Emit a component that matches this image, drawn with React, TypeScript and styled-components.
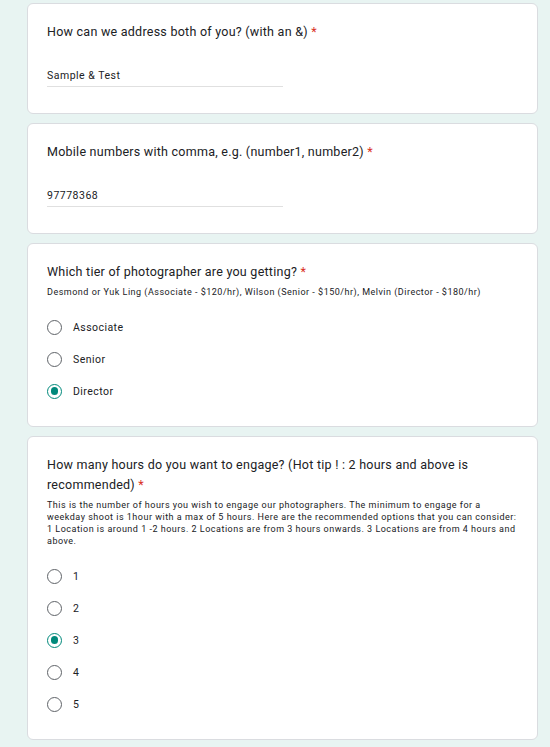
import React from "react";
import styled, { createGlobalStyle } from "styled-components";

const Global = createGlobalStyle`
  html, body { margin: 0; padding: 0; background: #e8f4f2; }
  body { font-family: Roboto, "Liberation Sans", Arial, sans-serif; color: #202124; }
`;

const Page = styled.div`
  display: flex;
  flex-direction: column;
  gap: 9px;
  padding: 3px 12px 12px 27px;
  min-height: 747px;
  box-sizing: border-box;
  background: #e8f4f2;
`;

const Card = styled.section<{ $choice?: boolean }>`
  width: 511px;
  box-sizing: border-box;
  background: #ffffff;
  border: 1px solid #dadce0;
  border-radius: 6px;
  padding: 18px 18px ${(p) => (p.$choice ? "19px" : "18px")} 19px;
`;

const Title = styled.div`
  font-family: Roboto, "Liberation Sans", sans-serif;
  font-size: 12.5px;
  line-height: 20px;
  color: #202124;
  letter-spacing: 0.25px;
`;

const Req = styled.span`
  color: #d93025;
`;

const Desc = styled.div`
  margin-top: 4px;
  font-family: Roboto, "Liberation Sans", sans-serif;
  font-size: 9px;
  line-height: 12px;
  letter-spacing: 0.5px;
  color: #202124;
`;

const TextAnswer = styled.div`
  margin-top: 24px;
  margin-bottom: 8px;
  width: 236px;
  font-size: 10.5px;
  line-height: 20px;
  letter-spacing: 0.5px;
  color: #202124;
  border-bottom: 1px solid #e0e0e0;
`;

const Options = styled.div`
  margin-top: 13px;
  display: flex;
  flex-direction: column;
`;

const Option = styled.label`
  display: flex;
  align-items: center;
  height: 32px;
  gap: 11px;
  font-size: 10.5px;
  letter-spacing: 0.45px;
  color: #202124;
`;

const Radio = styled.span<{ $checked?: boolean }>`
  flex: none;
  width: 15px;
  height: 15px;
  box-sizing: border-box;
  border-radius: 50%;
  border: 1.5px solid ${(p) => (p.$checked ? "#00897b" : "#5f6368")};
  display: flex;
  align-items: center;
  justify-content: center;
  &::after {
    content: "";
    display: ${(p) => (p.$checked ? "block" : "none")};
    width: 7.5px;
    height: 7.5px;
    border-radius: 50%;
    background: #00897b;
  }
`;

function RadioGroup({ options, selected }: { options: string[]; selected: string }) {
  return (
    <Options>
      {options.map((o) => (
        <Option key={o}>
          <Radio $checked={o === selected} />
          {o}
        </Option>
      ))}
    </Options>
  );
}

export default function App() {
  return (
    <>
      <Global />
      <Page>
        <Card>
          <Title>
            How can we address both of you? (with an &amp;) <Req>*</Req>
          </Title>
          <TextAnswer>Sample &amp; Test</TextAnswer>
        </Card>
        <Card>
          <Title>
            Mobile numbers with comma, e.g. (number1, number2) <Req>*</Req>
          </Title>
          <TextAnswer>97778368</TextAnswer>
        </Card>
        <Card $choice>
          <Title>
            Which tier of photographer are you getting? <Req>*</Req>
          </Title>
          <Desc>
            Desmond or Yuk Ling (Associate - $120/hr), Wilson (Senior - $150/hr), Melvin (Director - $180/hr)
          </Desc>
          <RadioGroup options={["Associate", "Senior", "Director"]} selected="Director" />
        </Card>
        <Card $choice>
          <Title>
            How many hours do you want to engage? (Hot tip ! : 2 hours and above is recommended) <Req>*</Req>
          </Title>
          <Desc>
            This is the number of hours you wish to engage our photographers. The minimum to engage for a weekday
            shoot is 1hour with a max of 5 hours. Here are the recommended options that you can consider: 1 Location
            is around 1 -2 hours. 2 Locations are from 3 hours onwards. 3 Locations are from 4 hours and above.
          </Desc>
          <RadioGroup options={["1", "2", "3", "4", "5"]} selected="3" />
        </Card>
      </Page>
    </>
  );
}
